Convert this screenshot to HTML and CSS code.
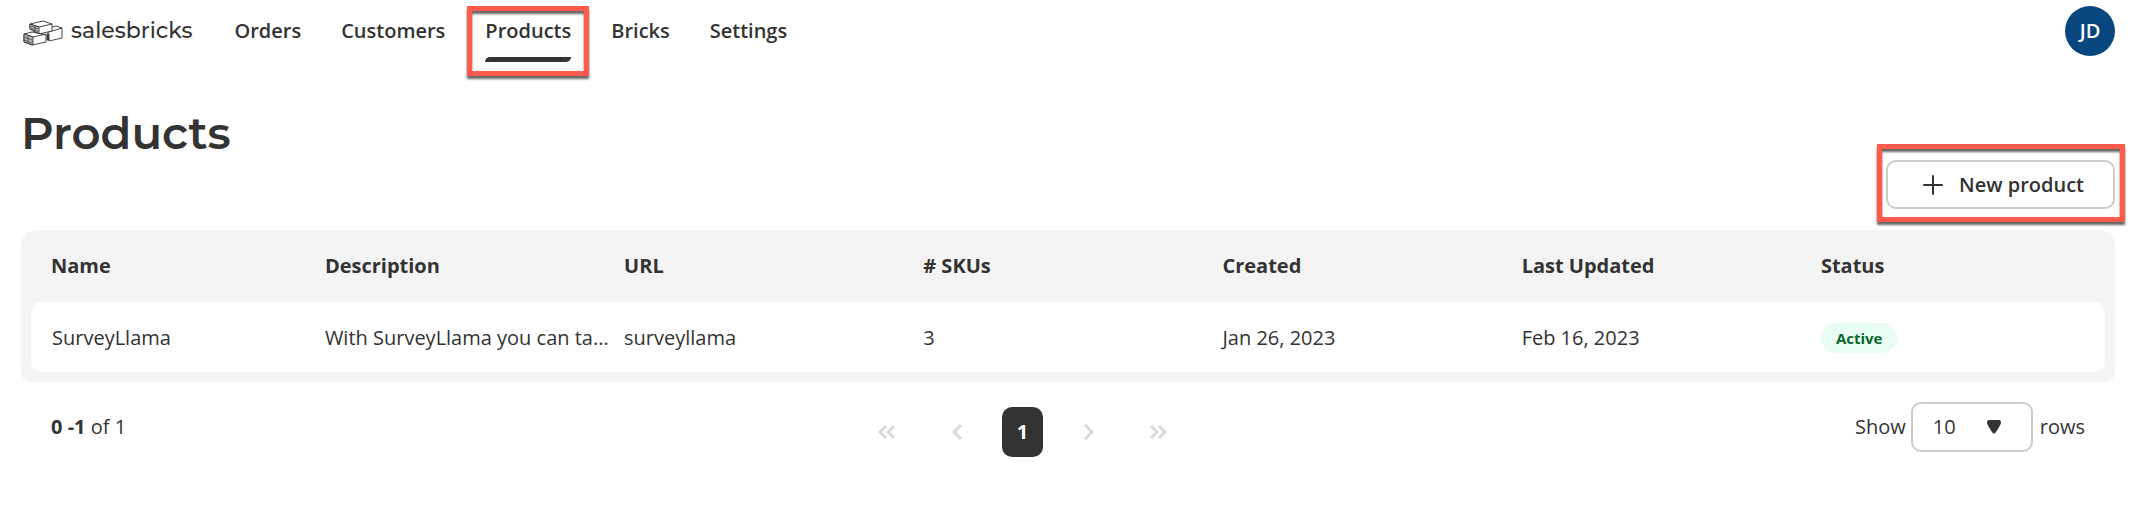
FILE: index.html
```html
<!DOCTYPE html>
<html lang="en">
<head>
  <meta charset="UTF-8">
  <meta name="viewport" content="width=device-width, initial-scale=1">
  <title>Products</title>
  <link rel="stylesheet" href="styles.css">
</head>
<body>

<header class="header">
  <a class="logo" href="#">
    <svg class="logo-icon" viewBox="0 0 40 26" fill="#fff" stroke="#333" stroke-width=".9" stroke-linejoin="round">
      <!-- right brick -->
      <path d="M25 13 L26 8 L33 6 L39 8 L39 18 L26 21 Z"/>
      <path d="M26 12 L39 8" fill="none"/>
      <!-- top brick -->
      <path d="M7 4 L20 1 L29 4 L29 11 L16 14 L7 9 Z"/>
      <path d="M7 4 L16 7 L29 4" fill="none"/>
      <path d="M7 4 L16 7 L16 14 L7 9 Z" fill="#bbb"/>
      <path d="M8 6 L15 9 M8 8 L15 12 M12 6 V11" fill="none" stroke-width=".7"/>
      <!-- left brick -->
      <path d="M1 14 L9 12 L23 15 L23 22 L9 25 L1 22 Z"/>
      <path d="M1 14 L10 17 L23 14" fill="none"/>
      <path d="M1 14 L10 17 L10 25 L1 22 Z" fill="#bbb"/>
      <path d="M1 17 L9 20 M1 20 L9 23 M5 16 V24" fill="none" stroke-width=".7"/>
      <path d="M24 14 L26 14 L26 20 L24 20 Z" fill="#555"/>
    </svg>
    <span class="logo-text">salesbricks</span>
  </a>
  <nav class="nav">
    <a class="nav-link" href="#">Orders</a>
    <a class="nav-link" href="#">Customers</a>
    <a class="nav-link active marked" href="#">Products</a>
    <a class="nav-link" href="#">Bricks</a>
    <a class="nav-link" href="#">Settings</a>
  </nav>
  <button class="avatar" type="button">JD</button>
</header>

<main class="main">
  <h1 class="title">Products</h1>

  <div class="toolbar">
    <div class="marked marked-btn">
      <button class="btn-new" type="button">
        <svg width="20" height="20" viewBox="0 0 20 20" stroke="#333" stroke-width="2" stroke-linecap="round"><path d="M10 1V19M1 10H19"/></svg>
        New product
      </button>
    </div>
  </div>

  <div class="table-wrap">
    <table class="table">
      <thead>
        <tr>
          <th class="col-name">Name</th>
          <th>Description</th>
          <th>URL</th>
          <th># SKUs</th>
          <th>Created</th>
          <th>Last Updated</th>
          <th class="col-status">Status</th>
        </tr>
      </thead>
      <tbody>
        <tr>
          <td class="col-name">SurveyLlama</td>
          <td>With SurveyLlama you can ta...</td>
          <td>surveyllama</td>
          <td>3</td>
          <td>Jan 26, 2023</td>
          <td>Feb 16, 2023</td>
          <td><span class="badge">Active</span></td>
        </tr>
      </tbody>
    </table>
  </div>

  <div class="footer">
    <div class="count"><b>0 -1</b> of 1</div>
    <div class="pager">
      <button class="page-btn" type="button" aria-label="First page" disabled>
        <svg width="18" height="16" viewBox="0 0 18 16"><path d="M8 2L2 8L8 14M16 2L10 8L16 14"/></svg>
      </button>
      <button class="page-btn" type="button" aria-label="Previous page" disabled>
        <svg width="18" height="18" viewBox="0 0 18 18"><path d="M13 2L6 9L13 16"/></svg>
      </button>
      <button class="page-btn current" type="button">1</button>
      <button class="page-btn" type="button" aria-label="Next page" disabled>
        <svg width="18" height="18" viewBox="0 0 18 18"><path d="M6 2L13 9L6 16"/></svg>
      </button>
      <button class="page-btn" type="button" aria-label="Last page" disabled>
        <svg width="18" height="16" viewBox="0 0 18 16"><path d="M2 2L8 8L2 14M10 2L16 8L10 14"/></svg>
      </button>
    </div>
    <div class="rows">
      <label for="rows">Show</label>
      <div class="select-wrap">
        <select class="select" id="rows">
          <option>10</option>
          <option>25</option>
          <option>50</option>
        </select>
        <svg class="select-arrow" width="14" height="14" viewBox="0 0 14 14" fill="#333"><path d="M2 0H12Q14 0 14 3Q13 6 9 12Q7 15 5 12Q1 6 0 3Q0 0 2 0Z"/></svg>
      </div>
      <span class="rows-text">rows</span>
    </div>
  </div>
</main>

</body>
</html>
```
FILE: styles.css
```css
* {
  box-sizing: border-box;
}

body {
  margin: 0;
  font-family: "Open Sans", "Noto Sans", sans-serif;
  font-size: 20px;
  line-height: 28px;
  color: #333;
  background: #fff;
}

button,
select {
  font-family: inherit;
  font-size: inherit;
  line-height: inherit;
  color: inherit;
}

/* header */
.header {
  display: flex;
  align-items: center;
  padding: 6px 30px 0 23px;
}
.logo {
  display: flex;
  align-items: center;
  gap: 8px;
  color: #333;
  text-decoration: none;
}
.logo-icon {
  width: 40px;
  height: 26px;
  margin-top: 4px;
}
.logo-text {
  font-family: Montserrat, Inter, sans-serif;
  font-size: 22px;
  font-weight: 500;
}
.nav {
  display: flex;
  gap: 40px;
  margin-left: 42px;
}
.nav-link {
  position: relative;
  font-weight: 600;
  color: #333;
  text-decoration: none;
}
.nav-link.active::before {
  content: "";
  position: absolute;
  left: 0;
  right: 0;
  bottom: -17px;
  height: 5px;
  border-radius: 6px 0 6px 0;
  background: #333;
}
.avatar {
  width: 50px;
  height: 50px;
  margin-left: auto;
  padding: 0;
  border: 0;
  border-radius: 50%;
  font-weight: 600;
  color: #fff;
  background: #08467f;
}

/* red frame around the highlighted item */
.marked {
  position: relative;
}
.marked::after {
  content: "";
  position: absolute;
  inset: -11px -18px -31px;
  border: 5px solid #ff5a4c;
  filter: drop-shadow(0 3px 1px rgba(0, 0, 0, .6));
  pointer-events: none;
}
.marked-btn::after {
  inset: -16px -10px -13px -9px;
}

/* content */
.main {
  padding: 0 30px 0 21px;
}
.title {
  margin: 49px 0 0;
  font-family: Montserrat, Inter, sans-serif;
  font-size: 45px;
  font-weight: 600;
  line-height: 56px;
}
.toolbar {
  display: flex;
  justify-content: flex-end;
  margin: -1px 0 21px;
}
.btn-new {
  display: flex;
  align-items: center;
  gap: 16px;
  height: 49px;
  padding: 0 29px 0 35px;
  border: 2px solid #ccc;
  border-radius: 10px;
  font-weight: 600;
  background: #fff;
}

.table-wrap {
  padding: 0 10px 10px;
  border-radius: 16px 16px 10px 10px;
  background: #f4f4f4;
}
.table {
  width: 100%;
  table-layout: fixed;
  border-collapse: separate;
  border-spacing: 0;
}
.table th,
.table td {
  padding: 0 12px 0 0;
  text-align: left;
  white-space: nowrap;
}
.table th {
  height: 72px;
  font-weight: 700;
}
.table td {
  height: 70px;
  padding-top: 1px;
  background: #fff;
}
.table .col-name {
  width: 14.17%;
  padding-left: 20px;
}
.table td.col-name {
  padding-left: 21px;
}
.table .col-status {
  width: 13.7%;
}
.table td:first-child {
  border-radius: 10px 0 0 10px;
}
.table td:last-child {
  border-radius: 0 10px 10px 0;
}
.badge {
  display: inline-block;
  padding: 0 15px;
  border-radius: 15px;
  font-size: 15px;
  font-weight: 700;
  line-height: 30px;
  vertical-align: middle;
  color: #0a652c;
  background: #e9fdf2;
}

/* pagination */
.footer {
  display: grid;
  grid-template-columns: 1fr auto 1fr;
  align-items: start;
  padding: 20px 30px 0;
}
.count {
  line-height: 50px;
}
.pager {
  display: flex;
  align-items: center;
  gap: 20px;
  margin-top: 5px;
  padding-right: 91px;
}
.page-btn {
  display: flex;
  align-items: center;
  justify-content: center;
  width: 50px;
  height: 50px;
  padding: 0;
  border: 0;
  background: none;
}
.page-btn svg {
  fill: none;
  stroke: #d9d9d9;
  stroke-width: 3;
}
.page-btn.current {
  width: 41px;
  border-radius: 10px;
  font-weight: 700;
  color: #fff;
  background: #333;
}
.rows {
  display: flex;
  align-items: center;
  justify-content: flex-end;
}
.select-wrap {
  position: relative;
  margin: 0 7px 0 5px;
}
.select {
  display: block;
  width: 122px;
  height: 50px;
  padding: 0 20px;
  border: 2px solid #ccc;
  border-radius: 10px;
  background: #fff;
  appearance: none;
}
.select-arrow {
  position: absolute;
  top: 18px;
  right: 32px;
  pointer-events: none;
}
```
